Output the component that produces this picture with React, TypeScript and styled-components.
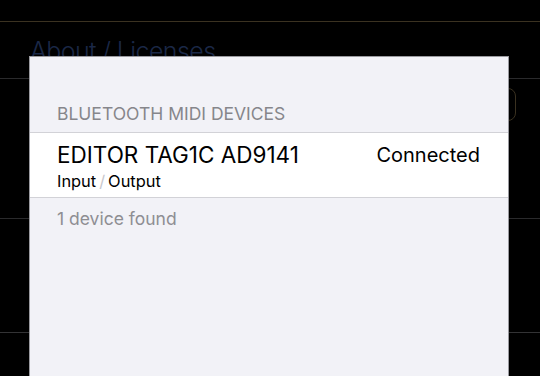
import React from "react";
import styled, { createGlobalStyle } from "styled-components";

const Global = createGlobalStyle`
  html, body { margin: 0; padding: 0; background: #000; }
  body { font-family: Inter, "Noto Sans", sans-serif; -webkit-font-smoothing: antialiased; }
  #root { width: 540px; height: 376px; overflow: hidden; }
`;

const Page = styled.div`
  position: relative;
  width: 540px;
  height: 376px;
  background: #000;
  overflow: hidden;
  display: flex;
  flex-direction: column;
`;

const Band = styled.div<{ $h: number; $line: string }>`
  height: ${(p) => p.$h}px;
  border-bottom: 1px solid ${(p) => p.$line};
  display: flex;
  align-items: flex-start;
  justify-content: space-between;
  flex-shrink: 0;
`;

const BgTitle = styled.div`
  margin: 14px 0 0 30px;
  font-size: 25px;
  line-height: 30px;
  color: #1b2847;
  font-weight: 300;
  letter-spacing: -0.6px;
`;

const BgButton = styled.div`
  margin: 9px 24px 0 0;
  width: 60px;
  height: 31px;
  border: 1px solid #3a3120;
  border-radius: 8px;
`;

const Modal = styled.div`
  position: absolute;
  left: 29px;
  top: 56px;
  width: 478px;
  bottom: -2px;
  background: #f2f2f7;
  border: 1px solid #9a9a9f;
  display: flex;
  flex-direction: column;
`;

const SectionHeader = styled.div`
  padding: 47px 0 0 27px;
  height: 28px;
  font-size: 17.5px;
  line-height: 20px;
  color: #86868b;
  text-transform: uppercase;
`;

const List = styled.div`
  background: #fff;
  border-top: 1px solid #d2d2d7;
  border-bottom: 1px solid #d2d2d7;
`;

const Row = styled.div`
  display: flex;
  justify-content: space-between;
  padding: 9px 28px 0 27px;
  height: 55px;
`;

const Main = styled.div`
  display: flex;
  flex-direction: column;
`;

const DeviceName = styled.div`
  font-size: 22.5px;
  line-height: 26px;
  color: #000;
`;

const Sub = styled.div`
  margin-top: 3px;
  font-size: 16.4px;
  line-height: 20px;
  color: #000;
`;

const Slash = styled.span`
  color: #c7c7cc;
  margin: 0 3px;
`;

const Status = styled.div`
  font-size: 20px;
  line-height: 26px;
  color: #000;
`;

const Footer = styled.div`
  padding: 10px 0 0 27px;
  font-size: 17.5px;
  line-height: 22px;
  color: #8e8e93;
`;

export default function App() {
  return (
    <>
      <Global />
      <Page>
        <Band $h={21} $line="#3b3221" />
        <Band $h={56} $line="#2a2a2c">
          <BgTitle>About / Licenses</BgTitle>
        </Band>
        <Band $h={139} $line="#2a2a2c">
          <span />
          <BgButton />
        </Band>
        <Band $h={113} $line="#333335" />
        <Modal>
          <SectionHeader>Bluetooth MIDI Devices</SectionHeader>
          <List>
            <Row>
              <Main>
                <DeviceName>EDITOR TAG1C AD9141</DeviceName>
                <Sub>
                  Input<Slash>/</Slash>Output
                </Sub>
              </Main>
              <Status>Connected</Status>
            </Row>
          </List>
          <Footer>1 device found</Footer>
        </Modal>
      </Page>
    </>
  );
}
